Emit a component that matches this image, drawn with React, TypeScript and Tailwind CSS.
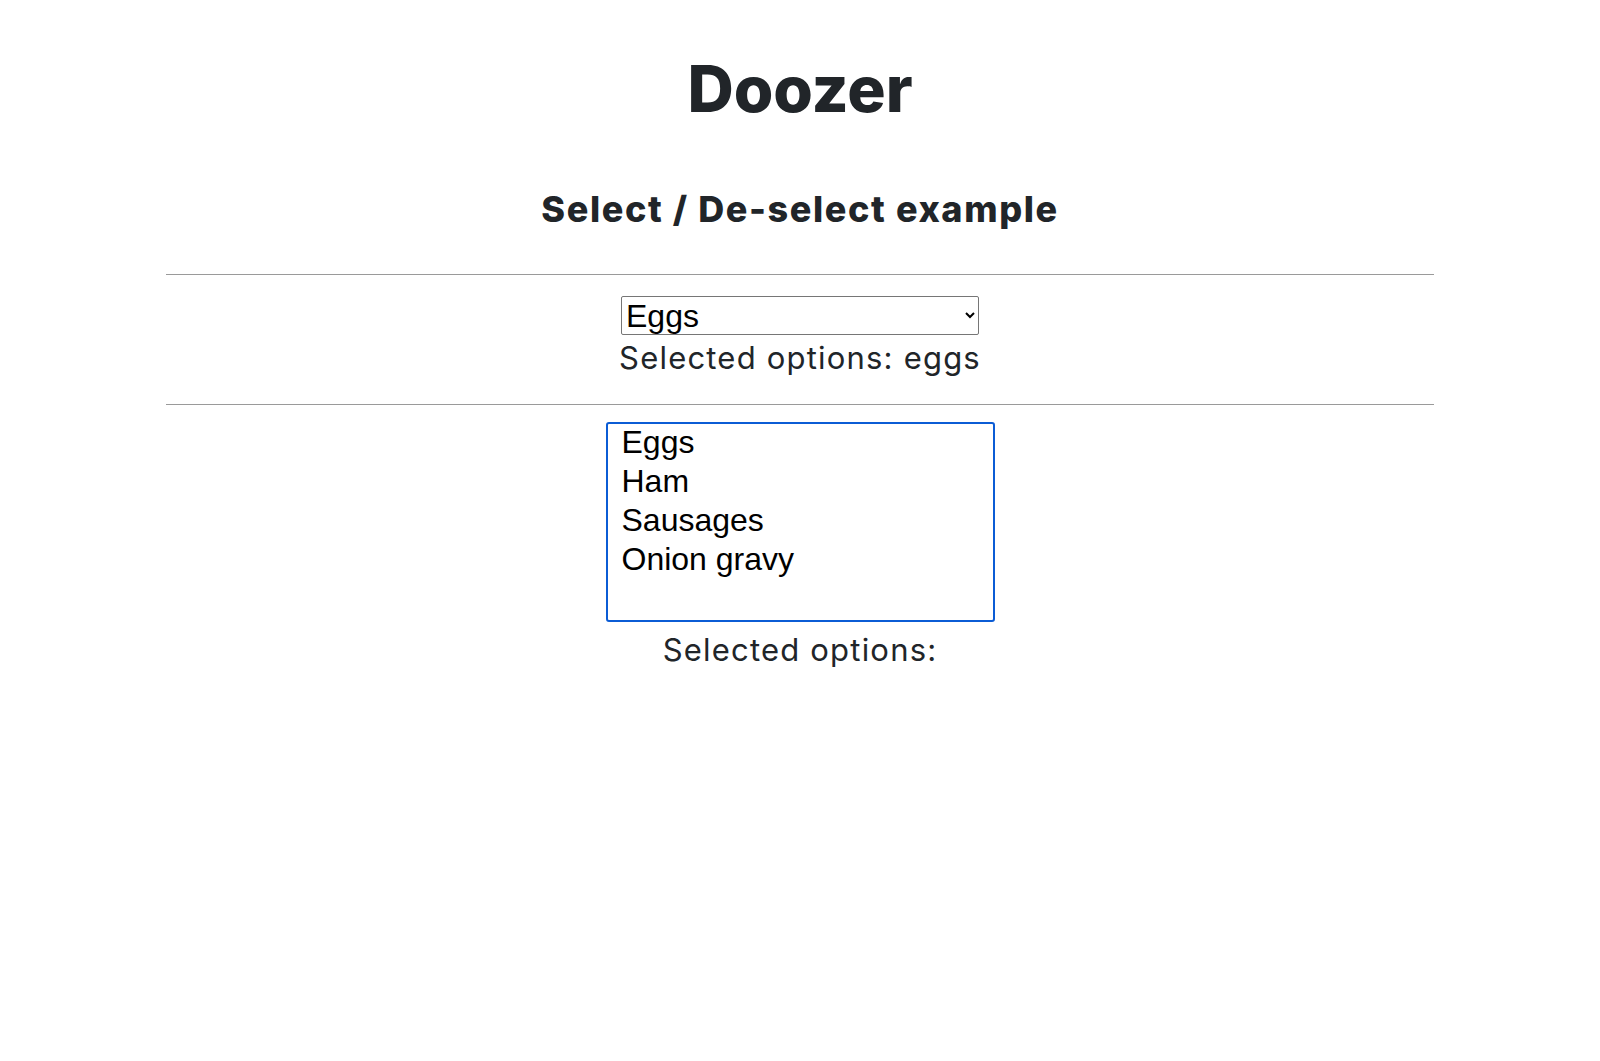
import React, { useState } from 'react';

const options = [
  { value: 'eggs', label: 'Eggs' },
  { value: 'ham', label: 'Ham' },
  { value: 'sausages', label: 'Sausages' },
  { value: 'onion-gravy', label: 'Onion gravy' },
];

const App: React.FC = () => {
  const [single, setSingle] = useState<string>('eggs');
  const [multi, setMulti] = useState<string[]>([]);

  return (
    <div className="min-h-screen bg-white text-[#212529] font-['Inter','Noto_Sans',sans-serif]">
      <div className="w-[1268px] mx-auto flex flex-col items-center">
        <h1 className="mt-[51px] text-[64px] leading-[76px] font-extrabold tracking-[0px]">Doozer</h1>
        <h2 className="mt-[61px] text-[36px] leading-[42px] font-extrabold tracking-[1.6px]">Select / De-select example</h2>

        <hr className="w-full mt-[44px] border-0 border-t border-[#9a9a9a]" />

        <div className="flex flex-col items-center pt-[21px] pb-[26px]">
          <select
            value={single}
            onChange={(e) => setSingle(e.target.value)}
            className="w-[358px] h-[39px] text-[32px] font-['Liberation_Sans',Arial,sans-serif] text-black border border-[#767676] rounded-[2px] bg-white pl-0"
          >
            {options.map((o) => (
              <option key={o.value} value={o.value}>
                {o.label}
              </option>
            ))}
          </select>
          <div className="mt-[3px] text-[31px] leading-[40px] tracking-[1.2px]">Selected options: {single}</div>
        </div>

        <hr className="w-full border-0 border-t border-[#9a9a9a]" />

        <div className="flex flex-col items-center pt-[17px]">
          <select
            multiple
            value={multi}
            onChange={(e) => setMulti(Array.from(e.target.selectedOptions).map((o) => o.value))}
            className="w-[389px] h-[200px] text-[32px] leading-[39px] font-['Liberation_Sans',Arial,sans-serif] text-black border-2 border-[#0b5cd5] rounded-[3px] bg-white px-[14px] py-0 outline-none overflow-hidden"
          >
            {options.map((o) => (
              <option key={o.value} value={o.value} className="h-[39px] leading-[39px] py-0">
                {o.label}
              </option>
            ))}
          </select>
          <div className="mt-[8px] text-[31px] leading-[40px] tracking-[1.2px]">Selected options: {multi.join(', ')}</div>
        </div>
      </div>
    </div>
  );
};

export default App;
